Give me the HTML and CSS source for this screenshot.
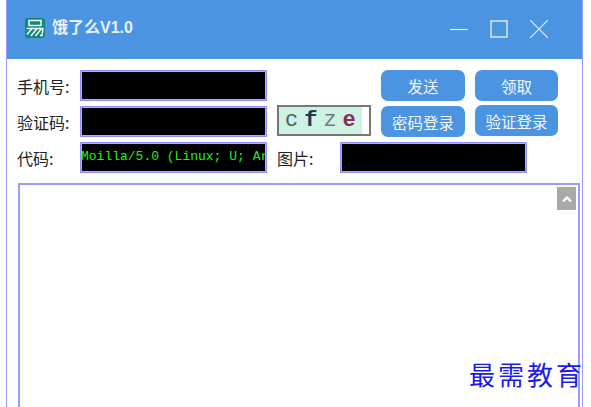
FILE: index.html
```html
<!DOCTYPE html>
<html lang="zh-CN">
<head>
    <meta charset="UTF-8">
    <meta name="viewport" content="width=device-width, initial-scale=1.0">
    <title>饿了么V1.0</title>
    <link rel="stylesheet" href="styles.css">
</head>
<body>
    <div class="window">
        <div class="titlebar">
            <svg class="logo" width="20" height="20" viewBox="0 0 20 20">
                <rect width="20" height="20" rx="3" fill="#12887a"/>
                <rect x="4" y="2.5" width="12" height="5" fill="none" stroke="#eef9f6" stroke-width="1.5"/>
                <path d="M1.5 10.5h16.5l-1 7h-2M7 10.5l-5 6M12 10.5l-6 7.5M16.5 10.5l-6 7.5" fill="none" stroke="#eef9f6" stroke-width="1.5"/>
            </svg>
            <span class="app-title">饿了么V1.0</span>
            <div class="win-controls">
                <svg width="18" height="18" viewBox="0 0 18 18"><path d="M0 9.5h18" stroke="#e4effb" stroke-width="1.2"/></svg>
                <svg width="18" height="18" viewBox="0 0 18 18"><rect x="1" y="1" width="16" height="16" fill="none" stroke="#e4effb" stroke-width="1.4"/></svg>
                <svg width="18" height="18" viewBox="0 0 18 18"><path d="M0 0l18 18M18 0L0 18" stroke="#e4effb" stroke-width="1.2"/></svg>
            </div>
        </div>

        <div class="form">
            <label class="label">手机号:</label>
            <div class="field"></div>
            <div class="spacer"></div>
            <button class="btn">发送</button>
            <button class="btn">领取</button>

            <label class="label">验证码:</label>
            <div class="field"></div>
            <div class="captcha">
                <span class="c1">c</span><span class="c2">f</span><span class="c3">z</span><span class="c4">e</span>
            </div>
            <button class="btn">密码登录</button>
            <button class="btn btn-up">验证登录</button>

            <label class="label">代码:</label>
            <div class="field field-code">Moilla/5.0 (Linux; U; Ar</div>
            <div class="pic-row">
                <label class="label pic-label">图片:</label>
                <div class="field"></div>
            </div>
        </div>

        <div class="log">
            <div class="scroll-up">
                <svg width="12" height="8" viewBox="0 0 12 8"><path d="M2 6.5l4-4 4 4" fill="none" stroke="#fff" stroke-width="2.4"/></svg>
            </div>
        </div>
    </div>
    <div class="watermark">最需教育</div>
</body>
</html>
```

FILE: styles.css
```css
html, body {
    margin: 0;
    height: 407px;
    overflow: hidden;
    background: #fff;
}
body {
    font-family: "Noto Sans CJK SC", "Liberation Sans", sans-serif;
    position: relative;
}
.window {
    box-sizing: border-box;
    width: 577px;
    height: 407px;
    margin-left: 6px;
    border-left: 1px solid #9a9aff;
    border-right: 1px solid #9a9aff;
    overflow: hidden;
}
.titlebar {
    display: flex;
    align-items: center;
    height: 59px;
    margin: 0 -1px;
    padding: 0 35px 4px 19px;
    background: #4a94e2;
    box-sizing: border-box;
}
.logo {
    margin-right: 7px;
}
.app-title {
    color: #e8f1fb;
    font-family: "Liberation Sans", "Noto Sans CJK SC", sans-serif;
    font-size: 16px;
    font-weight: 700;
    margin-bottom: 3px;
}
.win-controls {
    display: flex;
    gap: 22px;
    margin-left: auto;
    margin-top: 3px;
}
.form {
    display: grid;
    grid-template-columns: 52px 187px 94px 84px 83px;
    grid-auto-rows: 31px;
    column-gap: 10px;
    row-gap: 5px;
    padding: 11px 0 0 11px;
}
.label {
    display: flex;
    align-items: center;
    margin-left: -1px;
    font-size: 16px;
    color: #222;
    white-space: nowrap;
}
.field {
    box-sizing: border-box;
    height: 31px;
    border: 1px solid #8c8cff;
    box-shadow: inset 0 0 0 1px #b4b4d8;
    border-radius: 1px;
    background: #000;
    overflow: hidden;
    white-space: nowrap;
}
.field-code {
    color: #1cf01c;
    font-family: "Liberation Mono", monospace;
    font-size: 13px;
    line-height: 28px;
}
.captcha {
    box-sizing: border-box;
    display: flex;
    align-items: center;
    gap: 6px;
    height: 31px;
    margin-top: -1px;
    padding-left: 6px;
    border: 2px solid #777;
    background: linear-gradient(to right, #cdf2e4 0, #cdf2e4 92%, #fff 92%);
    font-family: "Liberation Mono", monospace;
    font-size: 22px;
}
.c1 { color: #47606a; }
.c2 { color: #1d3a55; font-weight: 700; }
.c3 { color: #7a7a78; }
.c4 { color: #8a2a5a; font-weight: 700; }
.btn {
    height: 31px;
    padding: 0;
    border: none;
    border-radius: 7px;
    background: #4a94e2;
    color: #f2f7fd;
    font-family: inherit;
    font-size: 15.5px;
}
.btn-up {
    margin-top: -1px;
}
.pic-row {
    grid-column: 3 / 6;
    display: flex;
    align-items: center;
}
.pic-label {
    width: 63px;
    margin-left: 0;
}
.pic-row .field {
    width: 187px;
}
.log {
    position: relative;
    box-sizing: border-box;
    height: 240px;
    margin: 10px 2px 0 11px;
    border: 2px solid #9a9aff;
    background: #fff;
}
.scroll-up {
    position: absolute;
    top: 2px;
    right: 2px;
    display: flex;
    align-items: center;
    justify-content: center;
    width: 19px;
    height: 23px;
    background: #a9a9a9;
}
.watermark {
    position: absolute;
    left: 469px;
    top: 355px;
    color: #1a1aee;
    font-family: "Noto Sans CJK SC", serif;
    font-size: 26px;
    letter-spacing: 3px;
    white-space: nowrap;
}
```
